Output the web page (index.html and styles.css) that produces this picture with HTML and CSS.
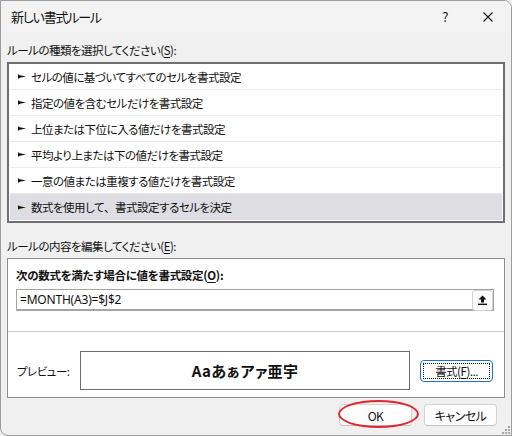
FILE: index.html
```html
<!DOCTYPE html>
<html lang="ja">
<head>
<meta charset="utf-8">
<title>新しい書式ルール</title>
<link rel="stylesheet" href="styles.css">
</head>
<body>
<div class="win">
  <div class="titlebar">
    <span class="title">新しい書式ルール</span>
    <span class="help">?</span>
    <svg class="close" width="10" height="10" viewBox="0 0 10 10"><path d="M0.5 0.5 L9.5 9.5 M9.5 0.5 L0.5 9.5" stroke="#1a1a1a" stroke-width="1.1" fill="none"/></svg>
  </div>
  <div class="content">
    <div class="label first">ルールの種類を選択してください(<u>S</u>):</div>
    <ul class="list">
      <li><svg class="pt" width="8" height="5" viewBox="0 0 8 5"><path d="M0 0.2 L1.8 1.3 L8 2.5 L1.8 3.7 L0 4.8 Z" fill="#111"/></svg>セルの値に基づいてすべてのセルを書式設定</li>
      <li><svg class="pt" width="8" height="5" viewBox="0 0 8 5"><path d="M0 0.2 L1.8 1.3 L8 2.5 L1.8 3.7 L0 4.8 Z" fill="#111"/></svg>指定の値を含むセルだけを書式設定</li>
      <li><svg class="pt" width="8" height="5" viewBox="0 0 8 5"><path d="M0 0.2 L1.8 1.3 L8 2.5 L1.8 3.7 L0 4.8 Z" fill="#111"/></svg>上位または下位に入る値だけを書式設定</li>
      <li><svg class="pt" width="8" height="5" viewBox="0 0 8 5"><path d="M0 0.2 L1.8 1.3 L8 2.5 L1.8 3.7 L0 4.8 Z" fill="#111"/></svg>平均より上または下の値だけを書式設定</li>
      <li><svg class="pt" width="8" height="5" viewBox="0 0 8 5"><path d="M0 0.2 L1.8 1.3 L8 2.5 L1.8 3.7 L0 4.8 Z" fill="#111"/></svg>一意の値または重複する値だけを書式設定</li>
      <li class="sel"><svg class="pt" width="8" height="5" viewBox="0 0 8 5"><path d="M0 0.2 L1.8 1.3 L8 2.5 L1.8 3.7 L0 4.8 Z" fill="#111"/></svg>数式を使用して<span class="fw">、</span>書式設定するセルを決定</li>
    </ul>
    <div class="label second">ルールの内容を編集してください(<u>E</u>):</div>
    <div class="panel">
      <div class="panel-top">
        <div class="blabel">次の数式を満たす場合に値を書式設定(<u>O</u>):</div>
        <div class="input">
          <span class="formula">=MONTH(A3)=$J$2</span>
          <span class="upbtn"><svg width="9" height="10" viewBox="0 0 9 10"><path d="M4.5 0.5 L8.5 4.5 L6 4.5 L6 7.5 L3 7.5 L3 4.5 L0.5 4.5 Z" fill="#111"/><rect x="0" y="8.6" width="9" height="1.4" fill="#111"/></svg></span>
        </div>
      </div>
      <div class="sep"></div>
      <div class="prev-row">
        <span class="plabel">プレビュー:</span>
        <div class="preview">Aaあぁアァ亜宇</div>
        <button class="fmt"><span class="focus">書式(<u>F</u>)...</span></button>
      </div>
    </div>
    <div class="actions">
      <button class="btn ok">OK</button>
      <button class="btn cancel">キャンセル</button>
    </div>
  </div>
  <div class="ellipse"></div>
  <svg class="grip" width="9" height="9" viewBox="0 0 9 9">
    <rect x="7" y="1" width="2" height="2" fill="#a8a8a8"/>
    <rect x="4" y="4" width="2" height="2" fill="#a8a8a8"/>
    <rect x="7" y="4" width="2" height="2" fill="#a8a8a8"/>
    <rect x="1" y="7" width="2" height="2" fill="#a8a8a8"/>
    <rect x="4" y="7" width="2" height="2" fill="#a8a8a8"/>
    <rect x="7" y="7" width="2" height="2" fill="#a8a8a8"/>
  </svg>
</div>
</body>
</html>
```
FILE: styles.css
```css
* { box-sizing: border-box; }
html, body { margin: 0; padding: 0; }
body {
  width: 512px;
  height: 436px;
  overflow: hidden;
  background: #f0f0f0;
  font-family: "Noto Sans CJK JP", "Noto Sans", sans-serif;
  font-feature-settings: "palt";
  font-size: 11.5px;
  letter-spacing: -0.5px;
  color: #111;
}
u { text-decoration: underline; text-underline-offset: 2px; }
.fw { font-feature-settings: normal; }
.win {
  position: relative;
  width: 512px;
  height: 436px;
  border: 1px solid #9c9c9c;
  border-radius: 0 8px 0 8px;
  background: #f0f0f0;
  overflow: hidden;
}
.titlebar {
  height: 31px;
  background: #f3f3f3;
  display: flex;
  align-items: center;
  padding-left: 10px;
}
.title { font-size: 13px; letter-spacing: -1.2px; flex: 1; padding-bottom: 1px; }
.help { font-size: 13px; margin-right: 35px; }
.close { margin-right: 18px; }
.content { padding: 0 6px; }
.label { height: 16px; line-height: 16px; }
.label.first { margin-top: 10px; }
.label.second { margin-top: 15px; }
.list {
  list-style: none;
  margin: 4px 0 0;
  padding: 0 1px 1px 1px;
  background: #fff;
  border: 2px solid #6f6f6f;
  height: 161px;
}
.list li {
  height: 26px;
  display: flex;
  align-items: center;
  padding-left: 8px;
  border-bottom: 1px solid #ebebeb;
}
.list li.sel { background: #dedde3; border-bottom: none; }
.pt { margin-right: 5px; }
.panel {
  margin-top: 4px;
  height: 140px;
  background: #fff;
  border: 1px solid #8e8e8e;
}
.panel-top { padding: 8px 10px 0 8px; }
.blabel { height: 16px; line-height: 16px; font-weight: bold; letter-spacing: -0.3px; }
.input {
  margin-top: 6px;
  height: 22px;
  border: 1px solid #a4a4a4;
  border-bottom: 2px solid #a4a4a4;
  display: flex;
  align-items: center;
  padding-left: 3px;
}
.formula {
  flex: 1;
  font-family: "Noto Sans", "Noto Sans CJK JP", sans-serif;
  font-size: 12px;
  letter-spacing: -0.2px;
}
.upbtn {
  width: 21px;
  height: 21px;
  margin-top: 1px;
  border: 1px solid #d2d2d2;
  border-radius: 3px;
  background: #fdfdfd;
  display: flex;
  align-items: center;
  justify-content: center;
}
.sep { margin-top: 20px; height: 1px; background: #c6c6c6; }
.prev-row {
  display: flex;
  align-items: center;
  padding: 19px 10px 0 9px;
}
.plabel { width: 63px; }
.preview {
  width: 330px;
  height: 39px;
  border: 1px solid #6e6e6e;
  display: flex;
  align-items: center;
  justify-content: center;
  font-size: 15px;
  letter-spacing: 0.4px;
  font-weight: bold;
}
.fmt {
  margin-left: 10px;
  width: 73px;
  height: 22px;
  padding: 2px;
  border: 1px solid #1f73c6;
  border-radius: 4px;
  background: #fdfdfd;
  font: inherit;
  letter-spacing: inherit;
  color: #111;
  display: flex;
}
.fmt .focus {
  flex: 1;
  border: 1px dotted #111;
  display: flex;
  align-items: center;
  justify-content: center;
  line-height: 14px;
}
.actions {
  display: flex;
  justify-content: flex-end;
  gap: 12px;
  padding-right: 8px;
  margin-top: 6px;
}
.btn {
  width: 73px;
  height: 22px;
  border: 1px solid #d3d3d3;
  border-bottom-color: #c2c2c2;
  border-radius: 4px;
  background: #fdfdfd;
  font: inherit;
  letter-spacing: inherit;
  font-size: 12px;
  color: #111;
  padding: 0;
}
.ellipse {
  position: absolute;
  left: 337px;
  top: 399px;
  width: 81px;
  height: 28px;
  border: 2px solid #e3262b;
  border-radius: 50%;
}
.grip { position: absolute; right: 1px; bottom: 1px; }
```
